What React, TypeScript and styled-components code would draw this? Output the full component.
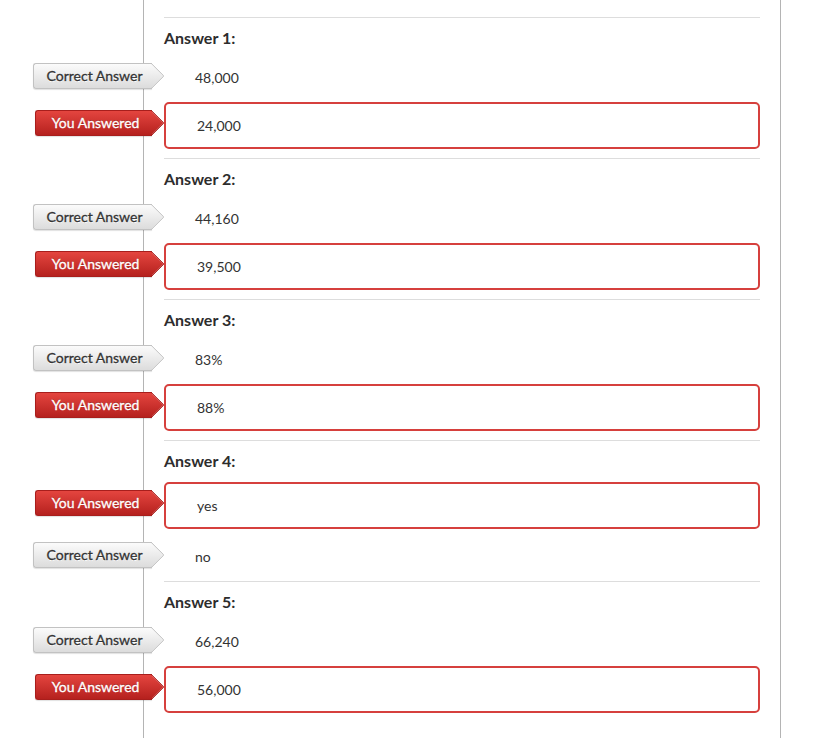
import React from "react";
import styled, { createGlobalStyle, css } from "styled-components";

const GlobalStyle = createGlobalStyle`
  html, body {
    margin: 0;
    padding: 0;
    background: #ffffff;
  }
  body {
    font-family: Lato, "Open Sans", "Liberation Sans", sans-serif;
    color: #333333;
  }
`;

const Page = styled.div`
  margin-left: 143px;
  width: 638px;
  min-height: 100vh;
  box-sizing: border-box;
  border-left: 1px solid #b4b4b4;
  border-right: 1px solid #b4b4b4;
  padding: 17px 20px 0 20px;
`;

const Section = styled.section`
  border-top: 1px solid #dddddd;
  padding: 10px 0 9px;
`;

const Heading = styled.h3`
  margin: 0 0 11px;
  font-size: 16px;
  line-height: 20px;
  font-weight: 700;
  color: #2d2d2d;
`;

const Rows = styled.div`
  display: flex;
  flex-direction: column;
  gap: 9px;
`;

const Row = styled.div<{ $wrong?: boolean }>`
  position: relative;
  display: flex;
  align-items: center;
  box-sizing: border-box;
  font-size: 14px;
  color: #333333;
  ${(p) =>
    p.$wrong
      ? css`
          height: 47px;
          border: 2px solid #d6403d;
          border-radius: 5px;
          padding-left: 31px;
        `
      : css`
          height: 34px;
          padding-left: 31px;
          padding-top: 2px;
        `}
`;

const Tag = styled.span<{ $wrong?: boolean }>`
  position: absolute;
  right: calc(100% + ${(p) => (p.$wrong ? 4 : 2)}px);
  top: 50%;
  transform: translateY(${(p) => (p.$wrong ? "calc(-50% - 3px)" : "-50%")});
  height: 26px;
  width: ${(p) => (p.$wrong ? 117 : 119)}px;
  margin-right: 10px;
  box-sizing: border-box;
  display: flex;
  align-items: center;
  justify-content: center;
  font-size: 14px;
  line-height: 1;
  white-space: nowrap;
  border-radius: 3px 0 0 3px;
  border: 1px solid;
  border-right: none;
  box-shadow: 0 1px 1px rgba(0, 0, 0, 0.12);
  -webkit-text-stroke: 0.3px currentColor;
  ${(p) =>
    p.$wrong
      ? css`
          color: #ffffff;
          background: linear-gradient(#e4453f, #b5211e);
          border-color: #a81e1c;
          text-shadow: 0 -1px 0 rgba(0, 0, 0, 0.25);
        `
      : css`
          color: #333333;
          background: linear-gradient(#fbfbfb, #dcdcdc);
          border-color: #c2c2c2;
          text-shadow: 0 1px 0 #ffffff;
        `}

  &::after {
    content: "";
    position: absolute;
    top: 3px;
    right: -9px;
    width: 18px;
    height: 18px;
    box-sizing: border-box;
    transform: rotate(45deg);
    border-top: 1px solid;
    border-right: 1px solid;
    border-radius: 0 2px 0 0;
    ${(p) =>
      p.$wrong
        ? css`
            background: linear-gradient(135deg, #e4453f, #b5211e);
            border-color: #a81e1c;
          `
        : css`
            background: linear-gradient(135deg, #fbfbfb, #dcdcdc);
            border-color: #c2c2c2;
          `}
  }
`;

const TagText = styled.span`
  position: relative;
  z-index: 1;
  margin-left: 3px;
`;

type Item = { kind: "correct" | "wrong"; value: string };

const answers: Item[][] = [
  [
    { kind: "correct", value: "48,000" },
    { kind: "wrong", value: "24,000" },
  ],
  [
    { kind: "correct", value: "44,160" },
    { kind: "wrong", value: "39,500" },
  ],
  [
    { kind: "correct", value: "83%" },
    { kind: "wrong", value: "88%" },
  ],
  [
    { kind: "wrong", value: "yes" },
    { kind: "correct", value: "no" },
  ],
  [
    { kind: "correct", value: "66,240" },
    { kind: "wrong", value: "56,000" },
  ],
];

export default function App() {
  return (
    <>
      <GlobalStyle />
      <Page>
        {answers.map((items, i) => (
          <Section key={i}>
            <Heading>Answer {i + 1}:</Heading>
            <Rows>
              {items.map((item, j) => {
                const wrong = item.kind === "wrong";
                return (
                  <Row key={j} $wrong={wrong}>
                    <Tag $wrong={wrong}>
                      <TagText>{wrong ? "You Answered" : "Correct Answer"}</TagText>
                    </Tag>
                    {item.value}
                  </Row>
                );
              })}
            </Rows>
          </Section>
        ))}
      </Page>
    </>
  );
}
